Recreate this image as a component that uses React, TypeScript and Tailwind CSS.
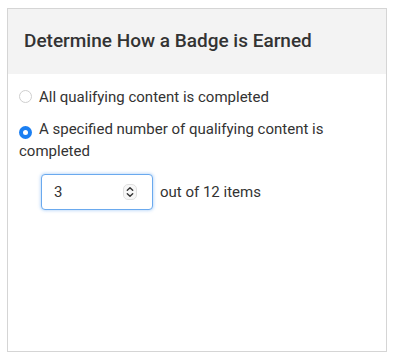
const Radio = ({ checked }: { checked?: boolean }) => {
  if (checked) {
    return (
      <span className="inline-flex items-center justify-center w-[13px] h-[13px] rounded-full bg-[#1b7ff2] align-[-1px] mr-[7px]">
        <span className="w-[5px] h-[5px] rounded-full bg-white" />
      </span>
    );
  }
  return (
    <span className="inline-block w-[13px] h-[13px] rounded-full border border-[#cfcfcf] bg-white align-[-1px] mr-[7px]" />
  );
};

const Spinner = () => (
  <svg width="14" height="16" viewBox="0 0 14 16" className="shrink-0">
    <rect x="0.5" y="0.5" width="13" height="15" rx="4.5" fill="#f7f7f7" stroke="#e0e0e0" />
    <path d="M4.3 6.3 L7 3.8 L9.7 6.3" fill="none" stroke="#333" strokeWidth="1.4" strokeLinecap="round" strokeLinejoin="round" />
    <path d="M4.3 9.7 L7 12.2 L9.7 9.7" fill="none" stroke="#333" strokeWidth="1.4" strokeLinecap="round" strokeLinejoin="round" />
  </svg>
);

export default function App() {
  return (
    <div className="w-[393px] h-[357px] bg-white pt-2 pl-[7px]" style={{ fontFamily: "Roboto, 'Liberation Sans', sans-serif" }}>
      <div className="w-[380px] h-[344px] border border-[#d5d5d5] flex flex-col">
        <div className="h-[65px] bg-[#f3f3f3] flex items-center px-4">
          <h2 className="text-[19px] font-medium text-[#333]">Determine How a Badge is Earned</h2>
        </div>
        <div className="pt-3 pl-[11px] pr-4 text-[15px] leading-[22px] text-[#333]">
          <div>
            <Radio />
            All qualifying content is completed
          </div>
          <div className="mt-[10px]">
            <Radio checked />
            A specified number of qualifying content is completed
          </div>
          <div className="mt-3 ml-[22px] flex items-center gap-[7px]">
            <div className="w-[112px] h-[36px] rounded-[4px] border border-[#6aa9ee] shadow-[0_0_3px_1px_rgba(90,160,240,0.35)] flex items-center justify-between pl-3 pr-[15px] bg-white">
              <span>3</span>
              <Spinner />
            </div>
            <span>out of 12 items</span>
          </div>
        </div>
      </div>
    </div>
  );
}
